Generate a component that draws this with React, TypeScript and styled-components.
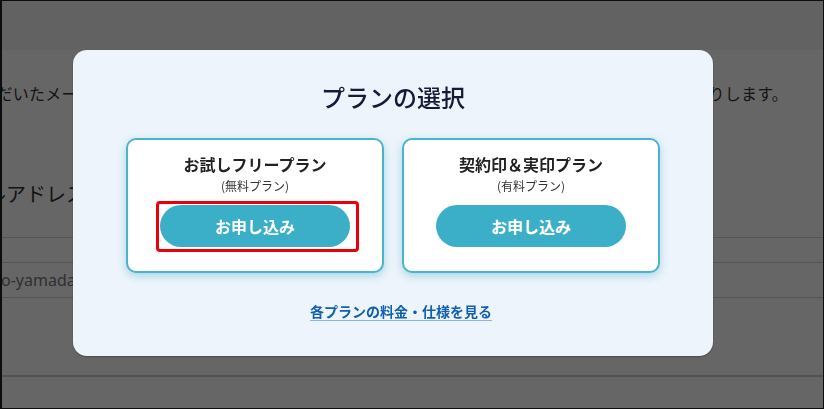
import styled, { createGlobalStyle } from "styled-components";

const GlobalStyle = createGlobalStyle`
  html, body {
    margin: 0;
    padding: 0;
    height: 100%;
    overflow: hidden;
  }
  body {
    font-family: "Noto Sans CJK JP", "Noto Sans", sans-serif;
  }
  #root {
    height: 100%;
  }
`;

const Page = styled.div`
  height: 100vh;
  box-sizing: border-box;
  border: 1px solid #222;
  border-left-width: 2px;
  background: #fff;
  overflow: hidden;
`;

const Header = styled.header`
  height: 49px;
  background: #f5f5f5;
`;

const Notice = styled.p`
  margin: 31px 0 0;
  padding-right: 35px;
  display: flex;
  justify-content: flex-end;
  font-size: 16px;
  line-height: 24px;
  letter-spacing: 0.2px;
  color: #333;
  white-space: nowrap;
`;

const FieldLabel = styled.div`
  margin-top: 74px;
  padding-bottom: 28px;
  border-bottom: 1px solid #d4d4d4;
  font-size: 20px;
  line-height: 30px;
  text-indent: -56px;
  color: #333;
  white-space: nowrap;
`;

const EmailField = styled.div`
  margin: 24px 0 0 -10px;
  height: 34px;
  border: 1px solid #d4d4d4;
  border-right: none;
  font-family: "Noto Sans", sans-serif;
  font-size: 16px;
  line-height: 34px;
  text-indent: -13px;
  color: #7a7a7a;
  white-space: nowrap;
`;

const Footer = styled.div`
  margin-top: 77px;
  border-top: 2px solid #cdcdcd;
`;

const Overlay = styled.div`
  position: fixed;
  inset: 0;
  box-sizing: border-box;
  padding: 50px 38px 0 0;
  background: rgba(0, 0, 0, 0.6);
  display: flex;
  justify-content: center;
  align-items: flex-start;
`;

const Modal = styled.div`
  width: 640px;
  box-sizing: border-box;
  padding: 29px 0 35px;
  background: #edf4fb;
  border-radius: 14px;
  box-shadow: 0 1px 2px rgba(0, 0, 0, 0.3);
  display: flex;
  flex-direction: column;
  align-items: center;
`;

const ModalTitle = styled.h2`
  margin: 0;
  font-size: 24px;
  line-height: 36px;
  font-weight: 500;
  color: #151a36;
`;

const PlanRow = styled.div`
  margin-top: 23px;
  display: flex;
  gap: 18px;
`;

const PlanCard = styled.div`
  width: 258px;
  box-sizing: border-box;
  padding: 12px 0 24px;
  background: #fff;
  border: 2px solid #4cb4ca;
  border-radius: 10px;
  box-shadow: 0 3px 8px rgba(60, 170, 200, 0.4);
  display: flex;
  flex-direction: column;
  align-items: center;
`;

const PlanName = styled.div`
  font-size: 16px;
  line-height: 24px;
  font-weight: 700;
  color: #222;
`;

const PlanNote = styled.div`
  margin-top: 1px;
  font-size: 12px;
  line-height: 18px;
  color: #333;
`;

const ButtonWrap = styled.div`
  position: relative;
  margin-top: 10px;
`;

const ApplyButton = styled.button`
  display: block;
  width: 190px;
  height: 42px;
  padding: 0;
  border: none;
  border-radius: 21px;
  background: #3cafc8;
  color: #fff;
  font-family: inherit;
  font-size: 16px;
  font-weight: 700;
  cursor: pointer;
`;

const Highlight = styled.span`
  position: absolute;
  top: -4px;
  right: -9px;
  bottom: -5px;
  left: -4px;
  border: 3px solid #e8000b;
  border-radius: 4px;
  pointer-events: none;
`;

const DetailLink = styled.a`
  margin: 28px 0 0 16px;
  font-size: 14px;
  line-height: 20px;
  font-weight: 700;
  color: #1160b0;
  text-decoration: underline;
  text-decoration-color: #8db4e2;
  text-underline-offset: 3px;
  cursor: pointer;
`;

const plans = [
  { name: "お試しフリープラン", note: "(無料プラン)", marked: true },
  { name: "契約印＆実印プラン", note: "(有料プラン)", marked: false },
];

export default function App() {
  return (
    <>
      <GlobalStyle />
      <Page>
        <Header />
        <Notice>
          <span>
            ご入力いただいたメールアドレス宛てに、お申し込み完了のお知らせメールと今後のサービスのご案内をお送りします。
          </span>
        </Notice>
        <FieldLabel>メールアドレス</FieldLabel>
        <EmailField>taro-yamada@example.com</EmailField>
        <Footer />
      </Page>
      <Overlay>
        <Modal>
          <ModalTitle>プランの選択</ModalTitle>
          <PlanRow>
            {plans.map((plan) => (
              <PlanCard key={plan.name}>
                <PlanName>{plan.name}</PlanName>
                <PlanNote>{plan.note}</PlanNote>
                <ButtonWrap>
                  <ApplyButton>お申し込み</ApplyButton>
                  {plan.marked && <Highlight />}
                </ButtonWrap>
              </PlanCard>
            ))}
          </PlanRow>
          <DetailLink>各プランの料金・仕様を見る</DetailLink>
        </Modal>
      </Overlay>
    </>
  );
}
